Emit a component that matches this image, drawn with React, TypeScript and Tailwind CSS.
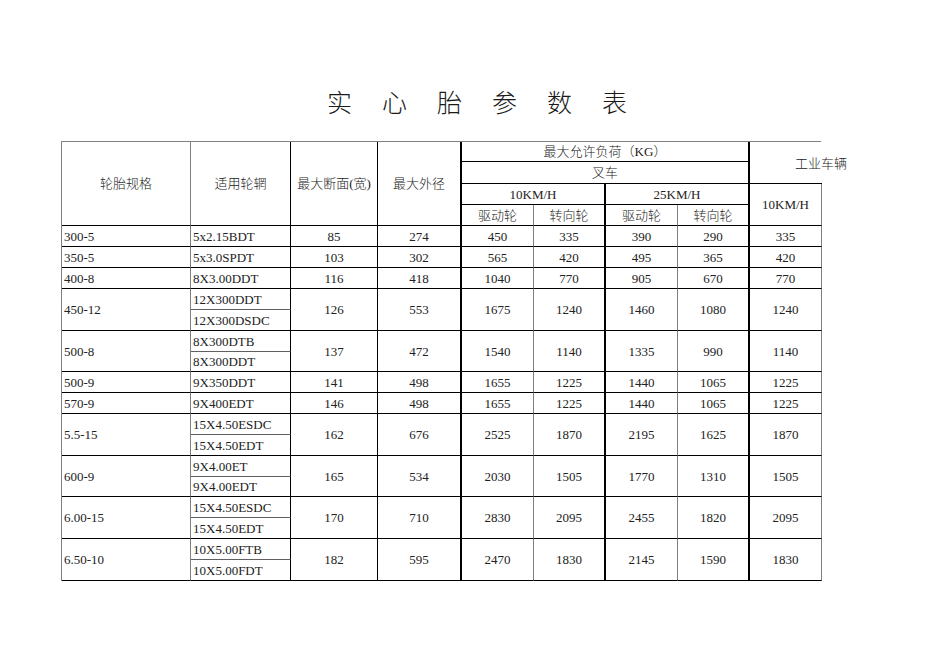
import React from "react";

type Row = { spec: string; rims: string[]; w: number; d: number; v: number[] };

const rows: Row[] = [
  { spec: "300-5", rims: ["5x2.15BDT"], w: 85, d: 274, v: [450, 335, 390, 290, 335] },
  { spec: "350-5", rims: ["5x3.0SPDT"], w: 103, d: 302, v: [565, 420, 495, 365, 420] },
  { spec: "400-8", rims: ["8X3.00DDT"], w: 116, d: 418, v: [1040, 770, 905, 670, 770] },
  { spec: "450-12", rims: ["12X300DDT", "12X300DSDC"], w: 126, d: 553, v: [1675, 1240, 1460, 1080, 1240] },
  { spec: "500-8", rims: ["8X300DTB", "8X300DDT"], w: 137, d: 472, v: [1540, 1140, 1335, 990, 1140] },
  { spec: "500-9", rims: ["9X350DDT"], w: 141, d: 498, v: [1655, 1225, 1440, 1065, 1225] },
  { spec: "570-9", rims: ["9X400EDT"], w: 146, d: 498, v: [1655, 1225, 1440, 1065, 1225] },
  { spec: "5.5-15", rims: ["15X4.50ESDC", "15X4.50EDT"], w: 162, d: 676, v: [2525, 1870, 2195, 1625, 1870] },
  { spec: "600-9", rims: ["9X4.00ET", "9X4.00EDT"], w: 165, d: 534, v: [2030, 1505, 1770, 1310, 1505] },
  { spec: "6.00-15", rims: ["15X4.50ESDC", "15X4.50EDT"], w: 170, d: 710, v: [2830, 2095, 2455, 1820, 2095] },
  { spec: "6.50-10", rims: ["10X5.00FTB", "10X5.00FDT"], w: 182, d: 595, v: [2470, 1830, 2145, 1590, 1830] },
];

const base = "flex items-center border-b border-b-[#000] min-w-0";
const center = "justify-center text-center";
const left = "justify-start pl-[2px]";

const rightB = [
  "border-r border-r-[#808080]",
  "border-r border-r-[#000]",
  "border-r border-r-[#000]",
  "border-r-2 border-r-[#000]",
  "border-r border-r-[#808080]",
  "border-r-2 border-r-[#000]",
  "border-r border-r-[#808080]",
  "border-r-2 border-r-[#000]",
  "border-r border-r-[#808080]",
];

function Cell({ cls, children }: { cls: string; children?: React.ReactNode }) {
  return <div className={`${base} ${cls}`}>{children}</div>;
}

export default function App() {
  const title = ["实", "心", "胎", "参", "数", "表"];
  return (
    <div className="w-[950px] h-[672px] bg-white text-[#222] font-light font-['Liberation_Serif','Noto_Sans_CJK_SC',serif] overflow-hidden">
      <div className="mt-[86px] h-[30px] flex justify-center gap-[30px] pl-[4px] text-[25px] leading-[30px] font-light font-['Noto_Sans_CJK_SC',sans-serif] text-[#1a1a1a]">
        {title.map((t) => (
          <span key={t}>{t}</span>
        ))}
      </div>
      <div className="mt-[25px] ml-[61px] w-[760px] grid grid-cols-[129px_100px_87px_84px_72px_72px_72px_72px_72px] grid-rows-[20px_22px_21px_21px_21px_21px_21px_21px_21px_21px_20px_21px_21px_21px_21px_21px_20px_21px_21px_21px_21px] border-l border-l-[#808080] border-t border-t-[#808080] text-[13px] leading-none">
        <Cell cls={`row-span-4 ${center} ${rightB[0]}`}>轮胎规格</Cell>
        <Cell cls={`row-span-4 ${center} ${rightB[1]}`}>适用轮辋</Cell>
        <Cell cls={`row-span-4 ${center} ${rightB[2]}`}>最大断面(宽)</Cell>
        <Cell cls={`row-span-4 ${center} ${rightB[3]}`}>最大外径</Cell>
        <Cell cls={`col-span-4 ${center} ${rightB[7]}`}>最大允许负荷（KG）</Cell>
        <Cell cls={`row-span-2 justify-start pl-[45px] whitespace-nowrap overflow-visible border-r-0 pt-[1px]`}>
          <span className="whitespace-nowrap">工业车辆</span>
        </Cell>
        <Cell cls={`col-span-4 ${center} ${rightB[7]}`}>叉车</Cell>
        <Cell cls={`col-span-2 ${center} ${rightB[5]}`}>10KM/H</Cell>
        <Cell cls={`col-span-2 ${center} ${rightB[7]}`}>25KM/H</Cell>
        <Cell cls={`row-span-2 ${center} ${rightB[8]}`}>10KM/H</Cell>
        <Cell cls={`${center} ${rightB[4]}`}>驱动轮</Cell>
        <Cell cls={`${center} ${rightB[5]}`}>转向轮</Cell>
        <Cell cls={`${center} ${rightB[6]}`}>驱动轮</Cell>
        <Cell cls={`${center} ${rightB[7]}`}>转向轮</Cell>

        {rows.map((r) => {
          const two = r.rims.length === 2;
          const span = two ? "row-span-2" : "";
          return (
            <React.Fragment key={r.spec}>
              <Cell cls={`${span} ${left} ${rightB[0]}`}>{r.spec}</Cell>
              <Cell cls={`${left} ${rightB[1]} ${two ? "border-b-[#606060]" : ""}`}>{r.rims[0]}</Cell>
              <Cell cls={`${span} ${center} ${rightB[2]}`}>{r.w}</Cell>
              <Cell cls={`${span} ${center} ${rightB[3]}`}>{r.d}</Cell>
              <Cell cls={`${span} ${center} ${rightB[4]}`}>{r.v[0]}</Cell>
              <Cell cls={`${span} ${center} ${rightB[5]}`}>{r.v[1]}</Cell>
              <Cell cls={`${span} ${center} ${rightB[6]}`}>{r.v[2]}</Cell>
              <Cell cls={`${span} ${center} ${rightB[7]}`}>{r.v[3]}</Cell>
              <Cell cls={`${span} ${center} ${rightB[8]}`}>{r.v[4]}</Cell>
              {two && <Cell cls={`${left} ${rightB[1]}`}>{r.rims[1]}</Cell>}
            </React.Fragment>
          );
        })}
      </div>
    </div>
  );
}
